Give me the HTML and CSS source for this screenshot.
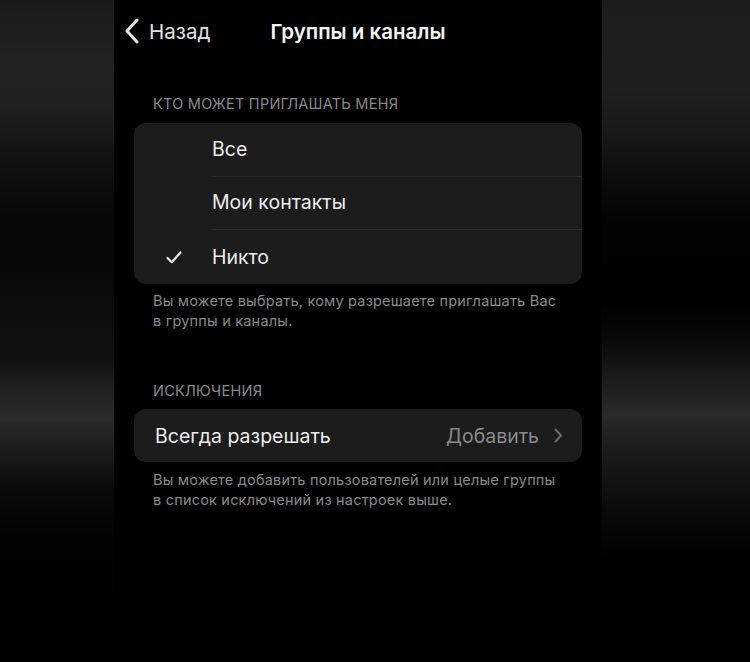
FILE: index.html
```html
<!DOCTYPE html>
<html lang="ru">
<head>
<meta charset="utf-8">
<link rel="stylesheet" href="styles.css">
</head>
<body>
<div class="stage">
  <div class="side side-left"></div>
  <main class="screen">
    <header class="nav">
      <div class="back">
        <svg class="back-icon" width="16" height="26" viewBox="0 0 16 26"><path d="M13 2 L3 13 L13 24" fill="none" stroke="#e6e6e6" stroke-width="3" stroke-linecap="round" stroke-linejoin="round"/></svg>
        <span>Назад</span>
      </div>
      <h1 class="title">Группы и каналы</h1>
      <div></div>
    </header>

    <div class="section-head first">КТО МОЖЕТ ПРИГЛАШАТЬ МЕНЯ</div>
    <div class="card">
      <div class="opt top"><span class="check"></span><span class="opt-label">Все</span></div>
      <div class="opt"><span class="check"></span><span class="opt-label">Мои контакты</span></div>
      <div class="opt last"><span class="check"><svg width="16" height="13" viewBox="0 0 16 13"><path d="M1.5 7 L5.8 11.2 L14.5 1.5" fill="none" stroke="#ececec" stroke-width="2.2" stroke-linecap="round" stroke-linejoin="round"/></svg></span><span class="opt-label">Никто</span></div>
    </div>
    <p class="foot">Вы можете выбрать, кому разрешаете приглашать Вас<br>в группы и каналы.</p>

    <div class="section-head second">ИСКЛЮЧЕНИЯ</div>
    <div class="card">
      <div class="link-row">
        <span class="link-label">Всегда разрешать</span>
        <span class="link-value">Добавить
          <svg width="9" height="15" viewBox="0 0 9 15"><path d="M1.5 1.5 L7 7.5 L1.5 13.5" fill="none" stroke="#6b6b6f" stroke-width="2" stroke-linecap="round" stroke-linejoin="round"/></svg>
        </span>
      </div>
    </div>
    <p class="foot foot2">Вы можете добавить пользователей или целые группы<br>в список исключений из настроек выше.</p>
  </main>
  <div class="side side-right"></div>
</div>
</body>
</html>
```

FILE: styles.css
```css
* { box-sizing: border-box; }
html, body { margin: 0; padding: 0; background: #000; }
body {
  font-family: Inter, "Noto Sans", "Liberation Sans", sans-serif;
  color: #ececec;
}
.stage {
  display: flex;
  width: 750px;
  height: 662px;
  overflow: hidden;
}
.side { height: 662px; }
.side-left {
  width: 114px;
  background: linear-gradient(to bottom,
    #1b1b1b 0px, #222 70px, #1f1f1f 110px, #121212 160px, #070707 220px,
    #080808 270px, #0d0d0d 310px, #111 360px, #242424 395px, #2a2a2a 420px,
    #1c1c1c 450px, #0a0a0a 490px, #020202 540px, #000 662px);
}
.side-right {
  width: 148px;
  background: linear-gradient(to bottom,
    #1d1d1d 0px, #1f1f1f 90px, #1a1a1a 130px, #0d0d0d 175px, #030303 220px,
    #000 300px, #080808 340px, #1a1a1a 375px, #2a2a2a 415px, #1d1d1d 445px,
    #101010 490px, #050505 530px, #000 560px, #000 662px);
}
.screen {
  width: 488px;
  height: 662px;
  background: #000;
  display: flex;
  flex-direction: column;
}
.nav {
  height: 62px;
  display: grid;
  grid-template-columns: 1fr auto 1fr;
  align-items: center;
  padding: 0 10px;
}
.back {
  display: flex;
  align-items: center;
  gap: 9px;
  font-size: 20.5px;
  color: #e2e2e2;
}
.back-icon { display: block; }
.title {
  margin: 0;
  font-size: 20.5px;
  font-weight: 600;
  color: #f4f4f4;
}
.section-head {
  font-size: 14.5px;
  line-height: 18px;
  color: #8a8a8e;
  padding: 0 39px;
  letter-spacing: 0.25px;
}
.section-head.first { margin-top: 33px; margin-bottom: 10px; }
.section-head.second { margin-top: 51px; margin-bottom: 9px; }
.card {
  margin: 0 20px;
  background: #1c1c1d;
  border-radius: 12px;
  overflow: hidden;
}
.opt {
  display: flex;
  align-items: center;
  height: 53px;
  padding-bottom: 3px;
  position: relative;
  font-size: 19.5px;
}
.opt.top { height: 54px; }
.opt.last { height: 54px; padding-bottom: 0; }
.opt::after {
  content: "";
  position: absolute;
  left: 78px;
  right: 0;
  bottom: 0;
  height: 1px;
  background: #2b2b2d;
}
.opt.last::after { display: none; }
.check {
  width: 78px;
  display: flex;
  justify-content: center;
  padding-left: 2px;
}
.check svg { display: block; }
.opt-label { color: #ededed; }
.foot {
  margin: 7px 0 0;
  padding: 0 10px 0 39px;
  font-size: 14.5px;
  line-height: 20px;
  letter-spacing: 0.2px;
  color: #8a8a8e;
}
.foot2 { margin-top: 8px; }
.link-row {
  height: 53px;
  display: flex;
  align-items: center;
  justify-content: space-between;
  padding: 0 19px 0 21px;
  font-size: 19.5px;
}
.link-label { color: #ededed; }
.link-value {
  display: flex;
  align-items: center;
  gap: 15px;
  color: #8a8a8e;
}
.link-value svg { display: block; }
```
